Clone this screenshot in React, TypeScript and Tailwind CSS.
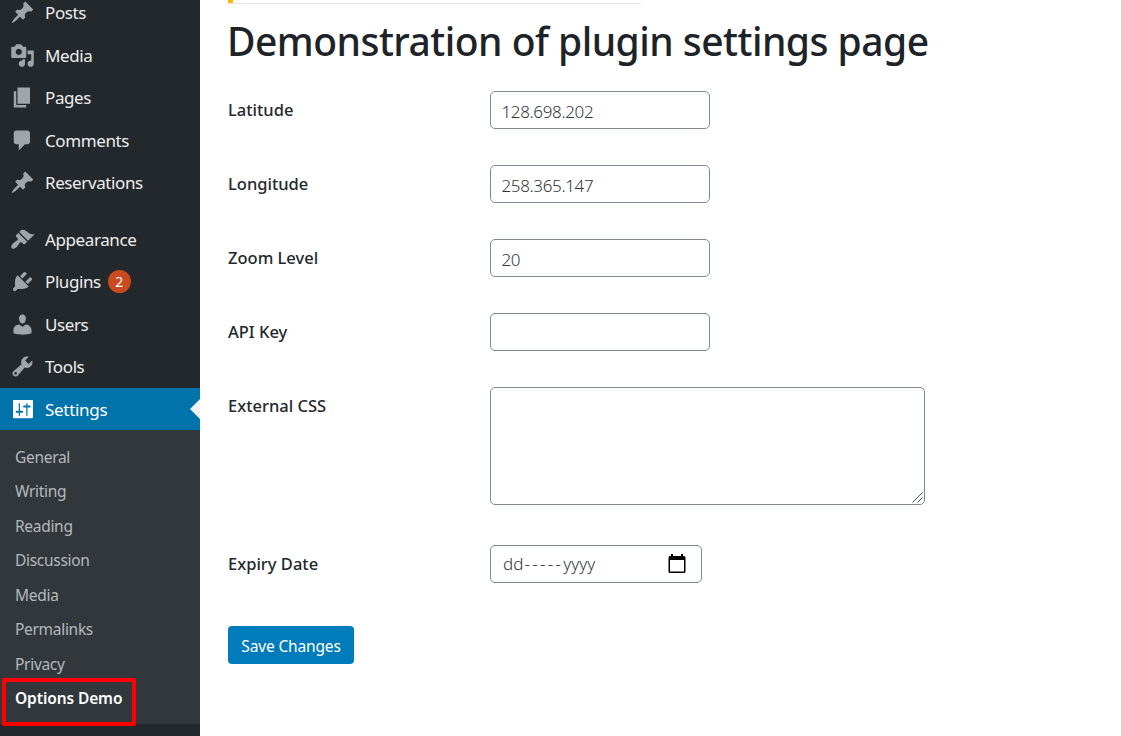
import React from "react";

type MenuItem = { label: string; path: string; badge?: string };

const PIN =
  "M10.44 3.02l1.82-1.82 6.36 6.35-1.83 1.82c-1.05-.68-2.48-.57-3.41.36l-.75.75c-.92.93-1.04 2.35-.35 3.41l-1.83 1.82-2.41-2.41-2.8 2.79c-.42.42-3.38 2.71-3.8 2.29s1.86-3.39 2.28-3.81l2.79-2.79L4.1 9.36l1.83-1.82c1.05.69 2.48.57 3.4-.36l.75-.75c.93-.92 1.05-2.35.36-3.41z";

const contentItems: MenuItem[] = [
  { label: "Posts", path: PIN },
  {
    label: "Media",
    path: "M13 11V4c0-.55-.45-1-1-1h-1.67L9 1H5L3.67 3H2c-.55 0-1 .45-1 1v7c0 .55.45 1 1 1h10c.55 0 1-.45 1-1zM7 4.5c1.38 0 2.5 1.12 2.5 2.5S8.38 9.5 7 9.5 4.5 8.38 4.5 7 5.62 4.5 7 4.5zM14 6h5v10.5c0 1.38-1.12 2.5-2.5 2.5S14 17.88 14 16.5s1.12-2.5 2.5-2.5c.17 0 .34.02.5.05V9h-3V6zm-4 8.05V13h2v3.5c0 1.38-1.12 2.5-2.5 2.5S7 17.88 7 16.5 8.12 14 9.5 14c.17 0 .34.02.5.05z",
  },
  { label: "Pages", path: "M6 15V2h10v13H6zm-1 1h8v2H3V5h2v11z" },
  {
    label: "Comments",
    path: "M5 2h9c1.1 0 2 .9 2 2v7c0 1.1-.9 2-2 2h-2l-5 5v-5H5c-1.1 0-2-.9-2-2V4c0-1.1.9-2 2-2z",
  },
  { label: "Reservations", path: PIN },
];

const adminItems: MenuItem[] = [
  {
    label: "Appearance",
    path: "M14.48 11.06L7.41 3.99l1.5-1.5c.5-.56 2.3-.47 3.51.32 1.21.8 1.43 1.28 2.91 2.1 1.18.64 2.45 1.26 4.45.85zm-.71.71L6.7 4.7 4.93 6.47c-.39.39-.39 1.02 0 1.41l1.06 1.06c.39.39.39 1.03 0 1.42-.6.6-1.43 1.11-2.21 1.69-.35.26-.7.53-1.01.84C1.43 14.23.4 16.08 1.4 17.07c.99 1 2.84-.03 4.18-1.36.31-.31.58-.66.85-1.02.57-.78 1.08-1.61 1.69-2.21.39-.39 1.02-.39 1.41 0l1.06 1.06c.39.39 1.02.39 1.41 0z",
  },
  {
    label: "Plugins",
    badge: "2",
    path: "M13.11 4.36L9.87 7.6 8 5.73l3.24-3.24c.35-.34 1.05-.2 1.56.32.52.51.66 1.21.31 1.55zm-8 1.77l.91-1.12 9.01 9.01-1.19.84c-.71.71-2.63 1.16-3.82 1.16H6.14L4.9 17.26c-.59.59-1.54.59-2.12 0-.59-.58-.59-1.53 0-2.12l1.24-1.24v-3.88c0-1.13.4-3.19 1.09-3.89zm7.26 3.97l3.24-3.24c.34-.35 1.04-.21 1.55.31.52.51.66 1.21.31 1.55l-3.24 3.25z",
  },
  {
    label: "Users",
    path: "M10 9.25c-2.27 0-2.73-3.44-2.73-3.44C7 4.02 7.82 2 9.97 2c2.16 0 2.98 2.02 2.71 3.81 0 0-.41 3.44-2.68 3.44zm0 2.57L12.72 10c2.39 0 4.52 2.33 4.52 4.53v2.49s-3.65 1.13-7.24 1.13c-3.65 0-7.24-1.13-7.24-1.13v-2.49c0-2.25 1.94-4.48 4.47-4.48z",
  },
  {
    label: "Tools",
    path: "M16.68 9.77c-1.34 1.34-3.3 1.67-4.95.99l-5.41 6.52c-.99.99-2.59.99-3.58 0s-.99-2.59 0-3.57l6.52-5.42c-.68-1.65-.35-3.61.99-4.95 1.28-1.28 3.12-1.62 4.72-1.06l-2.89 2.89 2.82 2.82 2.86-2.87c.53 1.58.18 3.39-1.08 4.65zM3.81 16.21c.4.39 1.04.39 1.43 0 .4-.4.4-1.04 0-1.43-.39-.4-1.03-.4-1.43 0-.39.39-.39 1.03 0 1.43z",
  },
];

const SETTINGS =
  "M18.400 16V3.300c0-.5-.4-.9-.9-.9H3.300c-.5 0-.9.4-.9.9V16c0 .5.4.9.9.9h14.200c.5 0 .9-.4.9-.9zM7 5h1v6h1.800q.7 0 .7.800t-.7.800H8V15H7v-2.400H5.200q-.7 0-.7-.800t.7-.800H7zM13 5h1v1.800h1.800q.7 0 .7.800t-.7.800H14V15h-1V8.400h-1.800q-.7 0-.7-.800t.7-.800H13z";

const subItems = ["General", "Writing", "Reading", "Discussion", "Media", "Permalinks", "Privacy"];

function Glyph({ path }: { path: string }) {
  return (
    <svg viewBox="0 0 20 20" className="ml-[10px] mr-[10px] size-[25px] shrink-0" fill="currentColor" fillRule="evenodd">
      <path d={path} />
    </svg>
  );
}

function MenuRow({ item }: { item: MenuItem }) {
  return (
    <li className="flex h-[42.5px] items-center text-[#a0a5aa]">
      <Glyph path={item.path} />
      <span className="text-[17px] leading-[23px] tracking-[-0.4px] text-[#eeeeee]">{item.label}</span>
      {item.badge && (
        <span className="ml-[7px] flex size-[23px] items-center justify-center rounded-full bg-[#ca4a1f] text-[14px] text-white">
          {item.badge}
        </span>
      )}
    </li>
  );
}

function Row({ label, height, children }: { label: string; height: string; children: React.ReactNode }) {
  return (
    <div className={"flex items-start " + height}>
      <label className="w-[262px] shrink-0 pt-[6px] text-[16.5px] font-medium leading-[25px] text-[#23282d]">{label}</label>
      {children}
    </div>
  );
}

const field =
  "block h-[38px] w-[220px] rounded-[5px] border border-[#7e8993] bg-white px-[10.5px] pt-[2px] text-[17px] font-[350] tracking-[-0.35px] text-[#32373c] outline-none";

export default function App() {
  return (
    <div className="flex h-[736px] w-[1121px] overflow-hidden bg-white font-['Noto_Sans','Open_Sans',sans-serif]">
      <nav className="h-full w-[200px] shrink-0 overflow-hidden bg-[#23282d]">
        <ul className="-mt-[8.5px]">
          {contentItems.map((i) => (
            <MenuRow key={i.label} item={i} />
          ))}
        </ul>
        <ul className="mt-[14px]">
          {adminItems.map((i) => (
            <MenuRow key={i.label} item={i} />
          ))}
        </ul>
        <div className="relative flex h-[42px] items-center bg-[#0073aa] text-white">
          <Glyph path={SETTINGS} />
          <span className="text-[17px] leading-[23px] tracking-[-0.3px]">Settings</span>
          <svg className="absolute right-0 top-[11px]" width="10" height="20" viewBox="0 0 10 20">
            <path d="M10 0v20L0 10z" fill="#f1f1f1" />
          </svg>
        </div>
        <div className="h-[294px] bg-[#32373c] pt-[10px]">
          <ul>
            {subItems.map((s) => (
              <li key={s} className="flex h-[34.5px] items-center pl-[15px] text-[15.5px] tracking-[-0.3px] text-[#b4b9be]">
                {s}
              </li>
            ))}
            <li className="relative flex h-[34.5px] items-center pl-[15px] text-[15.5px] font-semibold tracking-[-0.1px] text-white">
              Options Demo
              <span className="absolute left-[2px] top-[-4px] h-[48px] w-[134px] rounded-[2px] border-4 border-[#ff0000]" />
            </li>
          </ul>
        </div>
      </nav>

      <main className="flex-1 pl-[28px]">
        <div className="h-[4px] w-[413px] border-b border-[#e5e5e5]">
          <div className="h-[3px] w-[5px] bg-[#ffb900]" />
        </div>
        <h1 className="-ml-px mt-[13px] whitespace-nowrap text-[39px] font-medium leading-[48px] tracking-[-0.52px] text-[#1d2327]">
          Demonstration of plugin settings page
        </h1>
        <form className="mt-[26px]" onSubmit={(e) => e.preventDefault()}>
          <Row label="Latitude" height="h-[74px]">
            <input className={field} defaultValue="128.698.202" />
          </Row>
          <Row label="Longitude" height="h-[74px]">
            <input className={field} defaultValue="258.365.147" />
          </Row>
          <Row label="Zoom Level" height="h-[74px]">
            <input className={field} defaultValue="20" />
          </Row>
          <Row label="API Key" height="h-[74px]">
            <input className={field} />
          </Row>
          <Row label="External CSS" height="h-[158px]">
            <div className="relative">
              <textarea className="block h-[118px] w-[435px] resize-none rounded-[5px] border border-[#7e8993] bg-white outline-none" />
              <svg className="absolute bottom-[2px] right-[2px]" width="11" height="11" viewBox="0 0 11 11">
                <path d="M0.500 10.500l10-10M5.500 10.500l5-5" stroke="#555" strokeWidth="1" fill="none" />
              </svg>
            </div>
          </Row>
          <Row label="Expiry Date" height="h-[81px]">
            <div className="flex h-[38px] w-[212px] items-center justify-between rounded-[5px] border border-[#7e8993] pl-[12px] pr-[15px] text-[17px] font-[350] text-[#32373c]">
              <span className="flex items-center">
                <span>dd</span>
                <span className="ml-px tracking-[2.3px]">-----</span>
                <span>yyyy</span>
              </span>
              <svg width="18" height="20" viewBox="0 0 18 20" className="-mt-px">
                <path
                  fill="#000"
                  fillRule="evenodd"
                  d="M3 0h2v2h8V0h2v2h1q1.500 0 1.500 1.500V17.500q0 1.500-1.500 1.500H2q-1.500 0-1.500-1.500V3.500q0-1.500 1.500-1.500h1zM2 6v11.500h14V6z"
                />
              </svg>
            </div>
          </Row>
          <button className="flex h-[38px] w-[126px] items-center justify-center rounded-[4px] bg-[#007cba] pt-[3px] text-[15.5px] tracking-[-0.15px] text-white">
            Save Changes
          </button>
        </form>
      </main>
    </div>
  );
}
